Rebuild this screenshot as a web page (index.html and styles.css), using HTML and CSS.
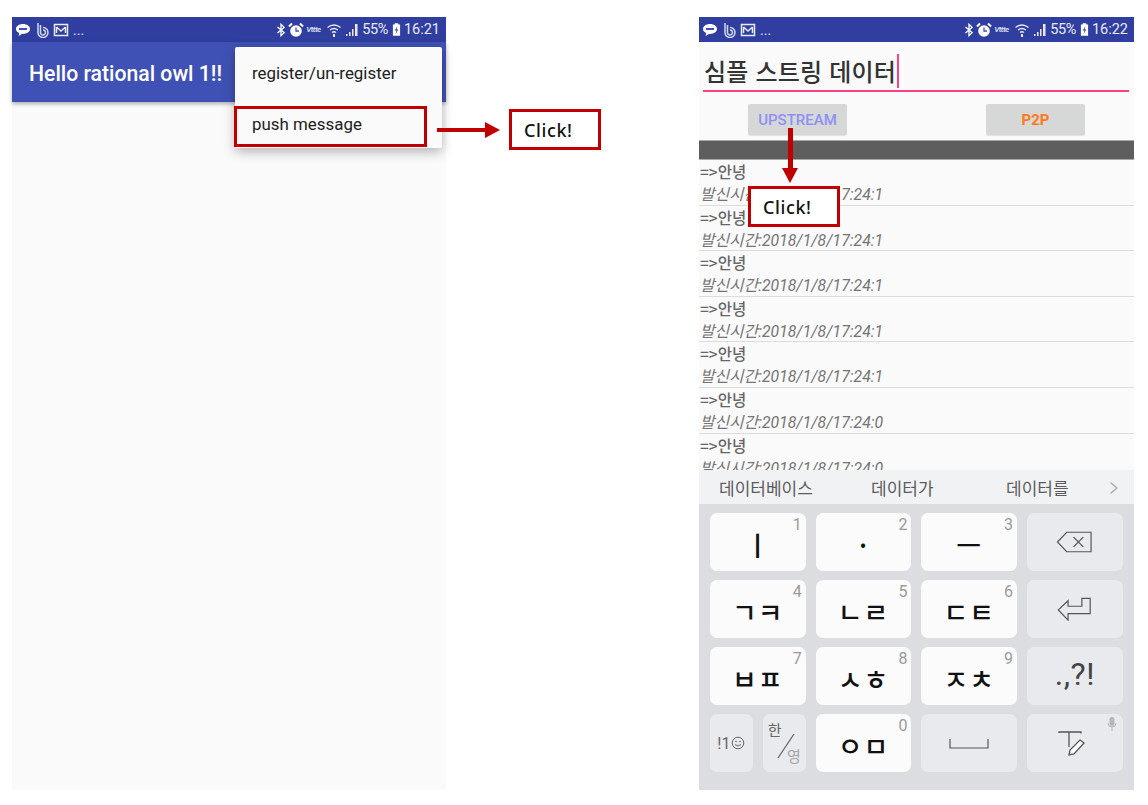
FILE: index.html
```html
<!DOCTYPE html>
<html lang="ko">
<head>
<meta charset="utf-8">
<title>Rational Owl</title>
<link rel="stylesheet" href="styles.css">
</head>
<body>
<main class="canvas">
  <section class="phone phone-a">
    <div class="status">
      <div class="status-left">
        <svg class="ic" viewBox="0 0 16 16"><path d="M8 2C4 2 1 4.300 1 7c0 1.800 1.300 3.300 3.200 4.100L3.600 14l3.300-2.100H8c4 0 7-2.200 7-4.900S12 2 8 2z" fill="#fff"/><rect x="4" y="6" width="8" height="2" fill="#3f51b5"/></svg>
        <svg class="ic" viewBox="0 0 16 16"><path d="M4 1v9a5 5 0 1 0 5-4.500M6.500 3v7a2.500 2.500 0 1 0 2.500-2" fill="none" stroke="#d5d8ee" stroke-width="1.500"/></svg>
        <svg class="ic" viewBox="0 0 16 16"><rect x="1.500" y="2.500" width="13" height="11" fill="none" stroke="#e8eaf6" stroke-width="1.500"/><path d="M3.500 5v6M12.500 5v6M3.500 5 8 9l4.500-4" fill="none" stroke="#e8eaf6" stroke-width="1.500"/></svg>
        <span class="more">...</span>
      </div>
      <div class="status-right">
        <svg class="ic-bt" viewBox="0 0 10 16"><path d="M1 4.500 8.500 11 5 14.500v-13L8.500 5 1 11.500" fill="none" stroke="#fff" stroke-width="1.500"/></svg>
        <svg class="ic" viewBox="0 0 16 16"><circle cx="8" cy="9" r="5.800" fill="#fff"/><path d="M1 4.500 4 1.500M15 4.500l-3-3" stroke="#fff" stroke-width="2"/><path d="M8 5.500V9h3" fill="none" stroke="#3f51b5" stroke-width="1.300"/></svg>
        <span class="lte">Vttte</span>
        <svg class="ic" viewBox="0 0 16 16"><path d="M1.500 5.500Q8 .5 14.500 5.500M4 8q4-3 8 0M6 10.500q2-1.500 4 0" fill="none" stroke="#e8eaf6" stroke-width="1.300"/><path d="M8 12v3" stroke="#e8eaf6" stroke-width="2"/></svg>
        <svg class="ic" viewBox="0 0 16 16"><path d="M2 12h1.500v2H2zM5 10h1.500v4H5zM8 7h1.500v7H8zM11 2h2.500v12H11z" fill="#e8eaf6"/></svg>
        <span class="pct">55%</span>
        <svg class="ic-bat" viewBox="0 0 10 16"><path d="M3 1h4v1.500h2V15H1V2.500h2z" fill="#fff"/><path d="M6 4 3 9h2l-1 4 3-5H5z" fill="#303f9f"/></svg>
        <span class="time">16:21</span>
      </div>
    </div>
    <header class="toolbar">Hello rational owl 1!!</header>
    <div class="menu">
      <div class="menu-item">register/un-register</div>
      <div class="menu-item">push message</div>
    </div>
    <div class="mark mark-push"></div>
  </section>

  <div class="note note-a">
    <div class="arrow-h"><span class="shaft-h"></span><span class="head-h"></span></div>
    <div class="click">Click!</div>
  </div>

  <section class="phone phone-b">
    <div class="status">
      <div class="status-left">
        <svg class="ic" viewBox="0 0 16 16"><path d="M8 2C4 2 1 4.300 1 7c0 1.800 1.300 3.300 3.200 4.100L3.600 14l3.300-2.100H8c4 0 7-2.200 7-4.900S12 2 8 2z" fill="#fff"/><rect x="4" y="6" width="8" height="2" fill="#3f51b5"/></svg>
        <svg class="ic" viewBox="0 0 16 16"><path d="M4 1v9a5 5 0 1 0 5-4.500M6.500 3v7a2.500 2.500 0 1 0 2.500-2" fill="none" stroke="#d5d8ee" stroke-width="1.500"/></svg>
        <svg class="ic" viewBox="0 0 16 16"><rect x="1.500" y="2.500" width="13" height="11" fill="none" stroke="#e8eaf6" stroke-width="1.500"/><path d="M3.500 5v6M12.500 5v6M3.500 5 8 9l4.500-4" fill="none" stroke="#e8eaf6" stroke-width="1.500"/></svg>
        <span class="more">...</span>
      </div>
      <div class="status-right">
        <svg class="ic-bt" viewBox="0 0 10 16"><path d="M1 4.500 8.500 11 5 14.500v-13L8.500 5 1 11.500" fill="none" stroke="#fff" stroke-width="1.500"/></svg>
        <svg class="ic" viewBox="0 0 16 16"><circle cx="8" cy="9" r="5.800" fill="#fff"/><path d="M1 4.500 4 1.500M15 4.500l-3-3" stroke="#fff" stroke-width="2"/><path d="M8 5.500V9h3" fill="none" stroke="#3f51b5" stroke-width="1.300"/></svg>
        <span class="lte">Vttte</span>
        <svg class="ic" viewBox="0 0 16 16"><path d="M1.500 5.500Q8 .5 14.500 5.500M4 8q4-3 8 0M6 10.500q2-1.500 4 0" fill="none" stroke="#e8eaf6" stroke-width="1.300"/><path d="M8 12v3" stroke="#e8eaf6" stroke-width="2"/></svg>
        <svg class="ic" viewBox="0 0 16 16"><path d="M2 12h1.500v2H2zM5 10h1.500v4H5zM8 7h1.500v7H8zM11 2h2.500v12H11z" fill="#e8eaf6"/></svg>
        <span class="pct">55%</span>
        <svg class="ic-bat" viewBox="0 0 10 16"><path d="M3 1h4v1.500h2V15H1V2.500h2z" fill="#fff"/><path d="M6 4 3 9h2l-1 4 3-5H5z" fill="#303f9f"/></svg>
        <span class="time">16:22</span>
      </div>
    </div>

    <div class="input-wrap">
      <div class="input"><span class="input-text">심플 스트링 데이터</span><span class="caret"></span></div>
    </div>
    <div class="buttons">
      <div class="btn btn-up">UPSTREAM</div>
      <div class="btn btn-p2p">P2P</div>
    </div>
    <div class="darkbar"></div>

    <div class="list">
      <div class="row"><div class="msg">=&gt;안녕</div><div class="sent">발신시간:2018/1/8/17:24:1</div></div>
      <div class="row"><div class="msg">=&gt;안녕</div><div class="sent">발신시간:2018/1/8/17:24:1</div></div>
      <div class="row"><div class="msg">=&gt;안녕</div><div class="sent">발신시간:2018/1/8/17:24:1</div></div>
      <div class="row"><div class="msg">=&gt;안녕</div><div class="sent">발신시간:2018/1/8/17:24:1</div></div>
      <div class="row"><div class="msg">=&gt;안녕</div><div class="sent">발신시간:2018/1/8/17:24:1</div></div>
      <div class="row"><div class="msg">=&gt;안녕</div><div class="sent">발신시간:2018/1/8/17:24:0</div></div>
      <div class="row"><div class="msg">=&gt;안녕</div><div class="sent">발신시간:2018/1/8/17:24:0</div></div>
    </div>

    <div class="suggest">
      <span class="sg sg-1">데이터베이스</span>
      <span class="sg sg-2">데이터가</span>
      <span class="sg sg-3">데이터를</span>
      <svg class="sg-more" viewBox="0 0 10 14"><path d="M1.500 1.500 8 7l-6.500 5.500" fill="none" stroke="#a5a7ab" stroke-width="1.200"/></svg>
    </div>

    <div class="keyboard">
      <div class="key"><span class="num">1</span><span class="jamo">ㅣ</span></div>
      <div class="key"><span class="num">2</span><span class="jamo">·</span></div>
      <div class="key"><span class="num">3</span><span class="jamo">ㅡ</span></div>
      <div class="key fn"><svg class="ic-key" viewBox="0 0 38 24"><path d="M1.500 12 11 2h25v20H11z" fill="none" stroke="#555" stroke-width="1.200"/><path d="M18 7l10 10M28 7 18 17" stroke="#555" stroke-width="1.400"/></svg></div>

      <div class="key"><span class="num">4</span><span class="jamo">ㄱㅋ</span></div>
      <div class="key"><span class="num">5</span><span class="jamo">ㄴㄹ</span></div>
      <div class="key"><span class="num">6</span><span class="jamo">ㄷㅌ</span></div>
      <div class="key fn"><svg class="ic-key" viewBox="0 0 38 26"><path d="M1.500 14 12 4v6h15V1.500h9V18H12v7z" fill="none" stroke="#555" stroke-width="1.300"/></svg></div>

      <div class="key"><span class="num">7</span><span class="jamo">ㅂㅍ</span></div>
      <div class="key"><span class="num">8</span><span class="jamo">ㅅㅎ</span></div>
      <div class="key"><span class="num">9</span><span class="jamo">ㅈㅊ</span></div>
      <div class="key fn"><span class="punct">.,?!</span></div>

      <div class="split">
        <div class="key fn"><span class="sym">!1</span><svg class="smile" viewBox="0 0 14 14"><circle cx="7" cy="7" r="5.800" fill="none" stroke="#666"/><circle cx="5" cy="5.500" r=".8" fill="#666"/><circle cx="9" cy="5.500" r=".8" fill="#666"/><path d="M4 8.500q3 3 6 0" fill="none" stroke="#666"/></svg></div>
        <div class="key fn">
          <span class="han">한</span>
          <svg class="slash" viewBox="0 0 20 26"><path d="M18 1 2 25" stroke="#666" stroke-width="1.300"/></svg>
          <span class="yeong">영</span>
        </div>
      </div>
      <div class="key"><span class="num">0</span><span class="jamo">ㅇㅁ</span></div>
      <div class="key fn"><svg class="ic-space" viewBox="0 0 40 12"><path d="M1 1v9h38V1" fill="none" stroke="#555" stroke-width="1.200"/></svg></div>
      <div class="key fn">
        <svg class="ic-mic" viewBox="0 0 10 14"><rect x="2.500" y="0" width="5" height="9" rx="2.500" fill="#b4b6ba"/><path d="M1 6q0 4 4 4t4-4M5 10v4" fill="none" stroke="#b4b6ba"/></svg>
        <svg class="ic-pen" viewBox="0 0 28 26"><path d="M1 2V1h22v1.500M11 1v15" fill="none" stroke="#555" stroke-width="1.300"/><path d="M22 9l4 3-10 11-5 1 1-5z" fill="#fff" stroke="#555" stroke-width="1.300"/></svg>
      </div>
    </div>

    <div class="mark-arrow">
      <div class="arrow-v"><span class="shaft-v"></span><span class="head-v"></span></div>
      <div class="click click-b">Click!</div>
    </div>
  </section>
</main>
</body>
</html>
```
FILE: styles.css
```css
* { box-sizing: border-box; }
html, body { margin: 0; padding: 0; background: #fff; }
body { width: 1148px; height: 805px; overflow: hidden; font-family: Roboto, "Noto Sans CJK KR", sans-serif; }

.canvas { position: relative; display: flex; padding: 17px 0 0 12px; height: 805px; }
.phone { position: relative; height: 773px; background: #fafafa; flex: none; overflow: visible; }
.phone-a { width: 434px; margin-right: 253px; }
.phone-b { width: 435px; display: flex; flex-direction: column; }

.status { height: 25px; flex: none; background: #303f9f; color: #e8eaf6; display: flex; justify-content: space-between; align-items: center; padding: 0 6px 0 3px; }
.status-left, .status-right { display: flex; align-items: center; }
.status-left { gap: 3px; }
.status-right { gap: 2px; }
.ic { width: 16px; height: 16px; display: block; flex: none; }
.ic-bt { width: 10px; height: 14px; display: block; flex: none; }
.ic-bat { width: 9px; height: 15px; display: block; flex: none; margin: 0 1px 0 2px; }
.more { font-size: 14px; line-height: 16px; margin-left: 1px; color: #e8eaf6; }
.lte { font-size: 8px; font-style: italic; font-weight: 700; width: 18px; overflow: hidden; color: #d5d8ee; letter-spacing: -.5px; }
.pct { font-size: 14.500px; letter-spacing: -.4px; }
.time { font-size: 14.500px; }

.toolbar { height: 60px; background: #3f51b5; color: #fff; font-size: 21.200px; font-weight: 500; display: flex; align-items: center; padding: 2px 0 0 17px; box-shadow: 0 2px 4px rgba(0,0,0,.3); }

.menu { position: absolute; left: 223px; top: 30px; width: 207px; height: 101px; background: #fafafa; border-radius: 2px; box-shadow: 0 4px 12px rgba(0,0,0,.28); padding-top: 1px; }
.menu-item { height: 51px; padding: 0 0 1px 17px; display: flex; align-items: center; font-size: 16.900px; color: #212121; }
.mark-push { position: absolute; left: 222px; top: 89px; width: 193px; height: 41px; border: 3px solid #c00000; }

.note-a { position: absolute; left: 437px; top: 109px; display: flex; align-items: center; gap: 9px; }
.arrow-h { display: flex; align-items: center; width: 63px; }
.shaft-h { height: 4px; flex: 1; background: #c00000; }
.head-h { width: 0; height: 0; border-left: 15px solid #c00000; border-top: 8px solid transparent; border-bottom: 8px solid transparent; }
.click { width: 92px; height: 41px; border: 3px solid #c00000; background: #fff; color: #111; font-family: "Noto Sans", sans-serif; font-size: 18px; font-weight: 500; letter-spacing: .6px; padding-left: 12px; display: flex; align-items: center; }

.input-wrap { height: 62px; flex: none; padding: 0 5px 0 4px; }
.input { height: 50px; border-bottom: 2px solid #ff4081; display: flex; align-items: flex-end; padding: 0 0 2px 1px; }
.input-text { font-family: "Noto Sans CJK KR", sans-serif; font-size: 24px; line-height: 34px; font-weight: 500; color: #333; letter-spacing: .2px; white-space: nowrap; }
.caret { width: 2px; height: 34px; background: #ff4081; margin-left: 1px; }

.buttons { height: 36px; flex: none; position: relative; display: flex; padding-left: 49px; gap: 139px; align-items: flex-start; }
.btn { width: 99px; height: 31px; background: #d6d7d7; border-radius: 2px; box-shadow: 0 1px 1px rgba(0,0,0,.1); font-size: 15px; font-weight: 500; display: flex; align-items: center; justify-content: center; }
.btn-up { color: #8f90f5; }
.btn-p2p { color: #ff7a1a; font-weight: 700; }

.darkbar { height: 20px; flex: none; background: #5e5e5e; border-top: 1px solid #a8a8a8; border-bottom: 1px solid #a8a8a8; }

.list { height: 310px; flex: none; overflow: hidden; }
.row { height: 45.600px; padding-left: 1px; border-bottom: 1px solid #dcdcdc; overflow: hidden; }
.msg { font-family: "Noto Sans CJK KR", Roboto, sans-serif; font-size: 15.500px; line-height: 23px; font-weight: 500; color: #666; }
.sent { font-family: Roboto, "Noto Sans CJK KR", sans-serif; font-size: 15.800px; line-height: 21px; margin-top: 1px; font-style: italic; color: #757575; }

.suggest { height: 34px; flex: none; background: #f1f2f4; position: relative; display: flex; align-items: center; font-family: "Noto Sans CJK KR", sans-serif; font-size: 17px; color: #5c5c5c; }
.sg { position: absolute; top: 50%; transform: translateY(-50%); white-space: nowrap; }
.sg-1 { left: 20px; }
.sg-2 { left: 172px; }
.sg-3 { left: 307px; }
.sg-more { position: absolute; left: 410px; top: 11px; width: 10px; height: 14px; }

.keyboard { flex: 1; background: #dcdde1; padding: 9px 11px 0; display: grid; grid-template-columns: repeat(4, 95.700px); grid-template-rows: repeat(4, 58px); column-gap: 10px; row-gap: 9px; }
.key { position: relative; background: #fbfbfb; border-radius: 7px; display: flex; align-items: center; justify-content: center; font-family: "Noto Sans CJK KR", sans-serif; min-width: 0; }
.key.fn { background: #e9eaed; }
.num { position: absolute; right: 4px; top: 2px; font-family: Roboto, sans-serif; font-size: 16px; color: #9a9a9a; }
.jamo { font-size: 27px; line-height: 1; color: #111; font-weight: 500; letter-spacing: 1px; margin-top: 5px; }
.punct { font-family: Roboto, sans-serif; font-size: 32px; color: #444; margin-top: -4px; letter-spacing: .5px; }
.ic-key { width: 37px; height: 24px; display: block; }
.ic-space { width: 40px; height: 12px; display: block; margin-top: 2px; }
.split { display: grid; grid-template-columns: 1fr 1fr; column-gap: 10px; }
.sym { font-family: Roboto, sans-serif; font-size: 16px; color: #666; }
.smile { width: 14px; height: 14px; display: block; margin-left: 1px; }
.han { position: absolute; left: 5px; top: 8px; font-size: 15px; line-height: 1; color: #666; }
.yeong { position: absolute; right: 5px; bottom: 9px; font-size: 15px; line-height: 1; color: #a5a5a5; }
.slash { position: absolute; left: 13px; top: 19px; width: 20px; height: 26px; }
.ic-mic { position: absolute; right: 6px; top: 3px; width: 10px; height: 14px; }
.ic-pen { width: 28px; height: 26px; display: block; margin: 2px 0 0 -6px; }

.mark-arrow { position: absolute; left: 49px; top: 111px; display: flex; flex-direction: column; }
.arrow-v { width: 84px; display: flex; flex-direction: column; align-items: center; height: 55px; margin-bottom: 3px; }
.shaft-v { width: 5px; flex: 1; background: #c00000; }
.head-v { width: 0; height: 0; border-top: 15px solid #c00000; border-left: 8px solid transparent; border-right: 8px solid transparent; }
.click-b { width: 92px; height: 41px; padding-left: 12px; }
```
